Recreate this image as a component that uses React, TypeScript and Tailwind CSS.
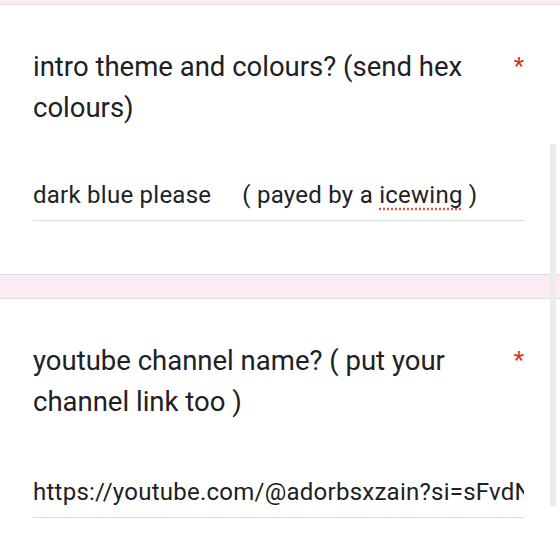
import React from "react";

function Question({ title, answer, gap }: { title: React.ReactNode; answer: React.ReactNode; gap: string }) {
  return (
    <div className="bg-white border-y border-[#e0dde0] pt-[41px] pb-[53px] pl-[33px] pr-[36px]">
      <div className="flex items-start justify-between">
        <div className="text-[27.5px] leading-[41px] text-[#202124] w-[450px]">{title}</div>
        <div className="text-[24px] leading-[30px] text-[#d93025] mt-[5px]">*</div>
      </div>
      <div className={`${gap} border-b border-[#dadce0] pb-[10px] overflow-hidden whitespace-pre text-[24px] tracking-[0.25px] leading-[30px] text-[#202124]`}>
        {answer}
      </div>
    </div>
  );
}

export default function App() {
  return (
    <div
      className="relative w-[560px] h-[560px] overflow-hidden bg-[#fcebf5]"
      style={{ fontFamily: "Roboto, 'Noto Sans', sans-serif" }}
    >
      <div className="pt-[4px] flex flex-col gap-[23px]">
        <Question
          gap="mt-[52px]"
          title={<>intro theme and colours? (send hex colours)</>}
          answer={
            <>
              dark blue please{"     "}( payed by a{" "}
              <span className="underline decoration-dotted decoration-[#e05050] underline-offset-[5px]">icewing</span> )
            </>
          }
        />
        <Question
          gap="mt-[55px]"
          title={<>youtube channel name? ( put your channel link too )</>}
          answer={<>https://youtube.com/@adorbsxzain?si=sFvdNqX</>}
        />
      </div>
      <div className="absolute left-[550px] top-[144px] w-[6px] h-[362px] bg-[#ececec]" />
    </div>
  );
}
